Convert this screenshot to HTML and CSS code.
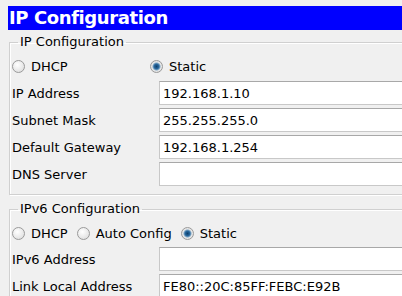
FILE: index.html
```html
<!DOCTYPE html>
<html lang="en">
<head>
    <meta charset="UTF-8">
    <title>IP Configuration</title>
    <link rel="stylesheet" href="styles.css">
</head>
<body>
    <div class="ablak">
        <h1 class="cim">IP Configuration</h1>

        <fieldset class="csoport">
            <legend>IP Configuration</legend>
            <div class="radio-sor">
                <label class="radio radio-ipv4"><input type="radio" name="ipv4"> DHCP</label>
                <label class="radio"><input type="radio" name="ipv4" checked> Static</label>
            </div>
            <div class="mezo-sor">
                <span class="felirat">IP Address</span>
                <input class="mezo" type="text" value="192.168.1.10">
            </div>
            <div class="mezo-sor">
                <span class="felirat">Subnet Mask</span>
                <input class="mezo" type="text" value="255.255.255.0">
            </div>
            <div class="mezo-sor">
                <span class="felirat">Default Gateway</span>
                <input class="mezo" type="text" value="192.168.1.254">
            </div>
            <div class="mezo-sor">
                <span class="felirat">DNS Server</span>
                <input class="mezo" type="text" value="">
            </div>
        </fieldset>

        <fieldset class="csoport csoport-ipv6">
            <legend>IPv6 Configuration</legend>
            <div class="radio-sor">
                <label class="radio"><input type="radio" name="ipv6"> DHCP</label>
                <label class="radio"><input type="radio" name="ipv6"> Auto Config</label>
                <label class="radio"><input type="radio" name="ipv6" checked> Static</label>
            </div>
            <div class="mezo-sor">
                <span class="felirat">IPv6 Address</span>
                <input class="mezo" type="text" value="">
            </div>
            <div class="mezo-sor">
                <span class="felirat">Link Local Address</span>
                <input class="mezo" type="text" value="FE80::20C:85FF:FEBC:E92B">
            </div>
        </fieldset>
    </div>
</body>
</html>
```

FILE: styles.css
```css
* {
    box-sizing: border-box;
    margin: 0;
    padding: 0;
}

body {
    background-color: #f0f0f0;
    font-family: "DejaVu Sans", Verdana, sans-serif;
    font-size: 13px;
    color: #000;
    overflow: hidden;
}

.ablak {
    width: 460px;
    padding-top: 6px;
}

.cim {
    margin-left: 8px;
    height: 24px;
    padding-left: 1px;
    background-color: #0000ff;
    color: #fff;
    font-size: 18px;
    font-weight: bold;
    letter-spacing: -0.4px;
    line-height: 24px;
}

.csoport {
    margin: 5px 0 0 9px;
    padding: 2px 0 8px 2px;
    border: 1px solid #d0d0d0;
    box-shadow: inset 1px 1px 0 #fff, 1px 1px 0 #fff;
    display: flex;
    flex-direction: column;
    gap: 3px;
}

.csoport legend {
    margin-left: 6px;
    padding: 0 2px;
    line-height: 14px;
}

.csoport-ipv6 {
    margin-top: 7px;
}

.radio-sor {
    display: flex;
    align-items: center;
    gap: 12px;
    height: 26px;
    padding-top: 4px;
    margin-bottom: 1px;
}

.csoport-ipv6 .radio-sor {
    gap: 9px;
    padding-top: 5px;
    margin-bottom: 0;
}

.radio {
    display: flex;
    align-items: center;
    gap: 6px;
}

.radio-ipv4 {
    width: 126px;
}

.radio input {
    appearance: none;
    width: 13px;
    height: 13px;
    border-radius: 50%;
    border: 1px solid #9a9a9a;
    background: radial-gradient(circle at 40% 35%, #fff 0, #e4e4e4 70%, #cfcfcf 100%);
}

.radio input:checked {
    background: radial-gradient(circle, #0e3f6b 0, #2a6aa0 2.5px, #7fa6c4 3.5px, #e8e8e8 4.5px, #d6d6d6 100%);
}

.mezo-sor {
    display: flex;
    align-items: center;
    height: 24px;
}

.felirat {
    width: 147px;
    flex-shrink: 0;
}

.mezo {
    flex: 1;
    height: 24px;
    padding-left: 3px;
    font-family: inherit;
    font-size: inherit;
    color: #000;
    background-color: #fff;
    border: 1px solid #e4e4e4;
    border-top-color: #a8a8a8;
    border-left-color: #c8c8c8;
    border-bottom-color: #c8c8c8;
    outline: none;
}
```
